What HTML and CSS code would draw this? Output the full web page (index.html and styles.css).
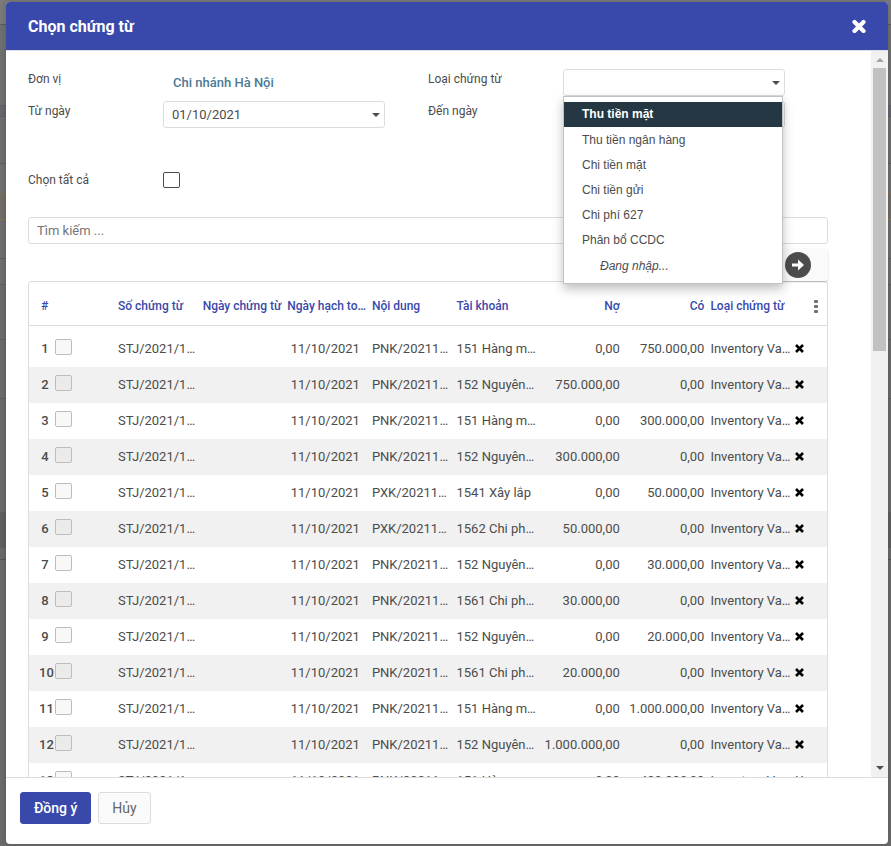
FILE: index.html
```html
<!DOCTYPE html>
<html lang="vi">
<head>
<meta charset="utf-8">
<title>Chọn chứng từ</title>
<link rel="stylesheet" href="styles.css">
</head>
<body>
<div class="dialog" role="dialog" aria-labelledby="dialog-title">
  <header class="dialog-header">
    <h1 id="dialog-title">Chọn chứng từ</h1>
    <button class="close" type="button" aria-label="Đóng">
      <svg viewBox="0 0 14 14" width="14" height="14"><path d="M2.500 3l9 9M11.500 3l-9 9" stroke="currentColor" stroke-width="4.200" stroke-linecap="round"/></svg>
    </button>
  </header>
  <div class="dialog-main">
    <div class="content">
      <div class="form">
        <span class="label">Đơn vị</span>
        <a class="unit" href="#">Chi nhánh Hà Nội</a>
        <label class="label second" for="doc-type">Loại chứng từ</label>
        <div class="picker">
          <input id="doc-type" type="text" role="combobox" aria-expanded="true" aria-controls="doc-menu">
          <span class="caret"></span>
          <ul class="menu" id="doc-menu" role="listbox">
            <li class="active" role="option" aria-selected="true">Thu tiền mặt</li>
            <li role="option">Thu tiền ngân hàng</li>
            <li role="option">Chi tiền mặt</li>
            <li role="option">Chi tiền gửi</li>
            <li role="option">Chi phí 627</li>
            <li role="option">Phân bổ CCDC</li>
            <li class="typing" role="option">Đang nhập...</li>
          </ul>
        </div>
        <label class="label" for="date-from">Từ ngày</label>
        <div class="picker"><input id="date-from" type="text" value="01/10/2021"><span class="caret"></span></div>
        <label class="label second" for="date-to">Đến ngày</label>
        <div class="picker"><input id="date-to" type="text"></div>
      </div>
      <div class="select-all">
        <label class="label" for="all">Chọn tất cả</label>
        <input class="check check-all" id="all" type="checkbox">
      </div>
      <input class="search" type="search" placeholder="Tìm kiếm ..." aria-label="Tìm kiếm">
      <div class="pager">
        <div class="pager-box">
          <button class="next" type="button" aria-label="Trang sau">
            <svg viewBox="0 0 26 26" width="26" height="26"><circle cx="13" cy="13" r="13" fill="#4c4c4c"/><path d="M7 11.5h6V7.6L19 13l-6 5.4v-3.9H7z" fill="#fff"/></svg>
          </button>
        </div>
      </div>
      <div class="table-box">
        <table>
          <colgroup><col class="col-num"><col><col><col><col><col><col><col><col><col class="col-act"></colgroup>
          <thead>
            <tr><th class="num">#</th><th>Số chứng từ</th><th>Ngày chứng từ</th><th>Ngày hạch to…</th><th>Nội dung</th><th>Tài khoản</th><th class="amount">Nợ</th><th class="amount">Có</th><th>Loại chứng từ</th>
            <th class="act"><button class="more" type="button" aria-label="Tùy chọn cột"><svg viewBox="0 0 4 13" width="4" height="13" fill="#707070"><rect width="4" height="3" rx="1"/><rect y="5" width="4" height="3" rx="1"/><rect y="10" width="4" height="3" rx="1"/></svg></button></th></tr>
          </thead>
          <tbody id="rows"></tbody>
        </table>
      </div>
    </div>
    <div class="scrollbar" aria-hidden="true"><span class="arrow up"></span><span class="thumb"></span><span class="arrow down"></span></div>
  </div>
  <footer class="dialog-footer">
    <button class="btn primary" type="button">Đồng ý</button>
    <button class="btn" type="button">Hủy</button>
  </footer>
</div>
<script src="rows.js"></script>
</body>
</html>
```
FILE: styles.css
```css
* { box-sizing: border-box; }
html { height: 100%; }
body {
  margin: 0;
  height: 100%;
  padding: 2px 3px 2px 6px;
  /* dimmed page behind the dialog */
  background: linear-gradient(#7b7b7b 24px, #5c5c5c 24px 25px, #6f7072 25px 105px, #5f6067 105px 106px, #66676e 106px 116px, #5f6067 116px 117px, #6e6e6e 117px 163px, #5e5e5e 163px 164px, #707070 164px 193px, #8a6d4d 193px 194px, #726d66 194px 219px, #8a744d 219px 220px, #6e6e6e 220px 258px, #5e5e5e 258px 259px, #6e6e6e 259px 284px, #5e5e5e 284px 285px, #6b6b6b 285px 339px, #5e5e5e 339px 340px, #6b6b6b 340px 398px, #5e5e5e 398px 399px, #6b6b6b 399px 512px, #606060 512px 548px, #6b6b6b 548px 559px, #555 559px 560px, #6b6b6b 560px);
  color: #4c4c4c;
  font-family: Roboto, "Liberation Sans", sans-serif;
  font-size: 13px;
  overflow: hidden;
}
button, input { font: inherit; color: inherit; }
button { padding: 0; border: 0; background: none; }

.dialog {
  display: flex;
  flex-direction: column;
  height: 100%;
  background: #fff;
  border-radius: 4px;
  overflow: hidden;
  box-shadow: 0 0 6px rgba(0, 0, 0, .2);
}
.dialog-header {
  display: flex;
  flex: none;
  align-items: center;
  justify-content: space-between;
  height: 48px;
  padding: 0 22px;
  background: #3949ab;
  color: #fff;
}
.dialog-header h1 { margin: 0; font-size: 16px; font-weight: 700; }
.close { display: flex; }
.dialog-main {
  display: flex;
  flex: 1;
  min-height: 0;
  border-top: 1px solid #dee2e6;
  border-bottom: 1px solid #dcdcdc;
}
.content { flex: 1; min-width: 0; padding: 18px 43px 0 22px; overflow: hidden; }

.form {
  display: grid;
  grid-template-columns: 135px 1fr 178px 1fr;
  row-gap: 5px;
  padding-right: 43px;
}
.label { font-size: 12px; }
.form .label { line-height: 20px; }
.second { padding-left: 43px; }
.unit {
  padding-left: 10px;
  line-height: 27px;
  color: #4c7a94;
  font-weight: 500;
  text-decoration: none;
}
.picker { position: relative; }
.picker input, .search {
  display: block;
  width: 100%;
  height: 27px;
  padding: 0 8px;
  background: #fff;
  border: 1px solid #dcdcdc;
  border-radius: 3px;
  outline: 0;
}
.caret {
  position: absolute;
  right: 5px;
  top: 12px;
  border: 4px solid transparent;
  border-top-color: #4c4c4c;
  border-bottom: 0;
}
.menu {
  position: absolute;
  z-index: 2;
  top: 27px;
  left: 0;
  width: 220px;
  margin: 0;
  padding: 5px 0 4px;
  list-style: none;
  background: #fff;
  border: 1px solid #c0c3c5;
  box-shadow: 0 5px 10px rgba(0, 0, 0, .25);
  font: 12px "Liberation Sans", sans-serif;
}
.menu li { padding: 0 18px; line-height: 25px; }
.menu .active { margin-bottom: 1px; background: #243742; color: #fff; font-weight: 700; }
.menu .typing { margin-top: 1px; padding-left: 36px; font-style: italic; }

.select-all {
  display: grid;
  grid-template-columns: 135px 1fr;
  align-items: center;
  height: 22px;
  margin-top: 41px;
}
.check {
  display: block;
  appearance: none;
  width: 17px;
  height: 16px;
  margin: 0;
  border: 1px solid #bdbdbd;
  border-radius: 2px;
  background: rgba(160, 160, 140, .08);
}
.check-all { border-color: #4c4c4c; background: #fff; }
.search { margin-top: 26px; appearance: none; }
.search::placeholder { color: #757575; opacity: 1; }
.pager { display: flex; justify-content: flex-end; height: 37px; padding-top: 4px; }
.pager-box {
  display: flex;
  align-items: center;
  justify-content: flex-end;
  width: 160px;
  height: 33px;
  padding-right: 17px;
  background: #fafafa;
  border-radius: 3px;
  box-shadow: 0 1px 2px rgba(0, 0, 0, .2);
}
.next { display: flex; }

.table-box { border: 1px solid #dcdcdc; border-radius: 3px 3px 0 0; }
table { width: 100%; table-layout: fixed; border-collapse: collapse; }
.col-num { width: 86px; }
.col-act { width: 35px; }
th, td {
  height: 36px;
  padding: 0 0 0 3px;
  overflow: hidden;
  text-align: left;
  text-overflow: ellipsis;
  white-space: nowrap;
}
th {
  height: 43px;
  padding-top: 6px;
  border-bottom: 1px solid #dcdcdc;
  color: #3949ab;
  font-size: 12px;
  font-weight: 500;
}
th.num { padding-left: 12px; }
.amount { padding-right: 3px; text-align: right; }
.date { padding-right: 9px; text-align: right; }
th.act { padding-left: 22px; }
tbody::before { content: ""; display: block; height: 5px; }
tbody tr:nth-child(even) { background: #f1f1f1; }
.pick {
  display: grid;
  grid-template-columns: 12px 17px;
  column-gap: 4px;
  align-items: center;
  padding-left: 7px;
  font-weight: 500;
}
.pick span { text-align: center; }
.pick .check { margin-bottom: 4px; }
.more { display: block; }
.more svg, .remove svg { display: block; }

.scrollbar {
  display: flex;
  flex: none;
  flex-direction: column;
  align-items: center;
  width: 17px;
  background: #f1f1f1;
}
.arrow { flex: none; border: 4px solid transparent; }
.up { margin: 7px 0 6px; border-top: 0; border-bottom-color: #a3a3a3; }
.down { margin: auto 0 7px; border-bottom: 0; border-top-color: #505050; }
.thumb { width: 13px; height: 39%; background: #c1c1c1; }

.dialog-footer { display: flex; flex: none; gap: 7px; padding: 14px 14px 20px; }
.btn {
  height: 32px;
  padding: 0 13px;
  border: 1px solid #dcdcdc;
  border-radius: 3px;
  background: #fafafa;
  color: #666;
  font-size: 14px;
}
.primary { border-color: #3949ab; background: #3949ab; color: #fff; font-weight: 500; }
```
FILE: rows.js
```js
const rows = [
  ["PNK/20211…", "151 Hàng m…", "0,00", "750.000,00"],
  ["PNK/20211…", "152 Nguyên…", "750.000,00", "0,00"],
  ["PNK/20211…", "151 Hàng m…", "0,00", "300.000,00"],
  ["PNK/20211…", "152 Nguyên…", "300.000,00", "0,00"],
  ["PXK/20211…", "1541 Xây lắp", "0,00", "50.000,00"],
  ["PXK/20211…", "1562 Chi ph…", "50.000,00", "0,00"],
  ["PNK/20211…", "152 Nguyên…", "0,00", "30.000,00"],
  ["PNK/20211…", "1561 Chi ph…", "30.000,00", "0,00"],
  ["PNK/20211…", "152 Nguyên…", "0,00", "20.000,00"],
  ["PNK/20211…", "1561 Chi ph…", "20.000,00", "0,00"],
  ["PNK/20211…", "151 Hàng m…", "0,00", "1.000.000,00"],
  ["PNK/20211…", "152 Nguyên…", "1.000.000,00", "0,00"],
  ["PNK/20211…", "151 Hàng m…", "0,00", "400.000,00"]
];
document.getElementById("rows").innerHTML = rows.map(([note, account, debit, credit], i) => `
  <tr>
    <td><div class="pick"><span>${i + 1}</span><input class="check" type="checkbox" aria-label="Chọn dòng ${i + 1}"></div></td>
    <td>STJ/2021/1…</td><td></td><td class="date">11/10/2021</td>
    <td>${note}</td><td>${account}</td>
    <td class="amount">${debit}</td><td class="amount">${credit}</td>
    <td>Inventory Va…</td>
    <td><button class="remove" type="button" aria-label="Xóa"><svg viewBox="0 0 9 9" width="9" height="9"><path d="M1 1l7 7M8 1L1 8" stroke="#000" stroke-width="2.6"/></svg></button></td>
  </tr>`).join("");
```
